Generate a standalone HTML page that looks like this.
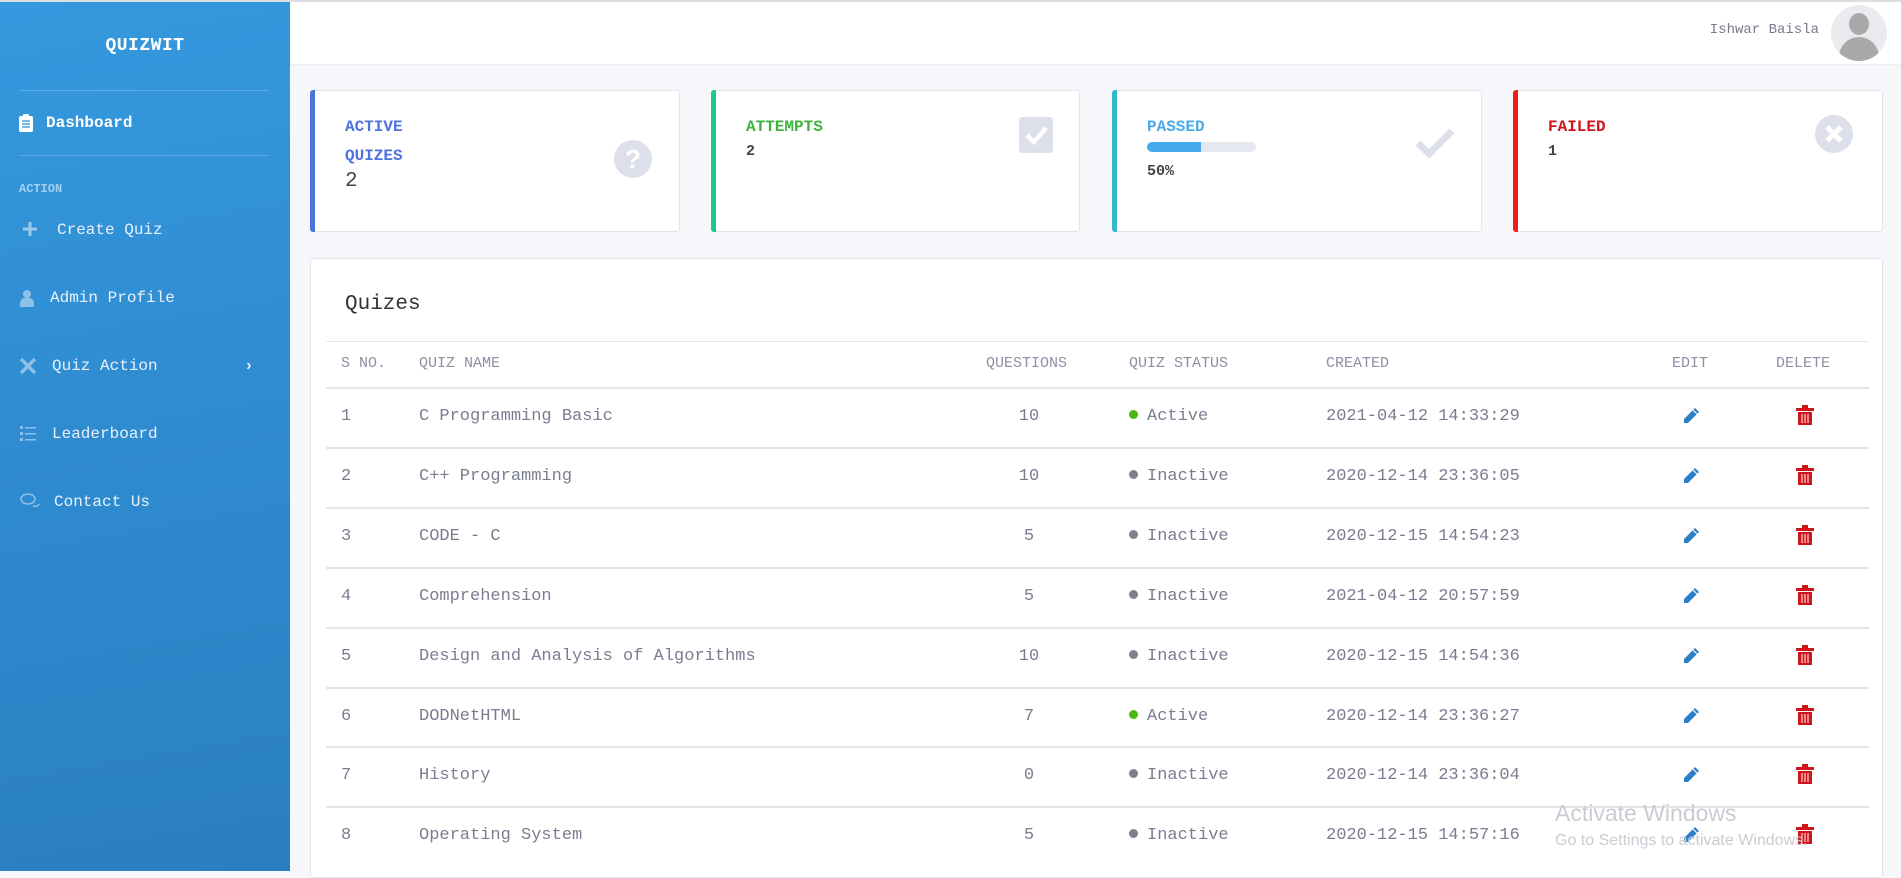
<!DOCTYPE html>
<html><head><meta charset="utf-8"><style>
*{box-sizing:border-box;margin:0;padding:0}
body{width:1901px;height:871px;overflow:hidden;background:#f5f7fb;font-family:"Liberation Mono","DejaVu Sans Mono",monospace;position:relative}
.tb{position:absolute;left:0;top:0;width:1901px;height:2px;background:#dcdde3}
.sb{position:absolute;left:0;top:2px;width:290px;height:869px;background:linear-gradient(170deg,#3599de 0%,#2f8bd0 50%,#2a7fc0 100%);color:#fff}
.abs{position:absolute}
.hr{position:absolute;left:19px;width:250px;height:1px;background:rgba(255,255,255,.22)}
.nav{position:absolute;color:#e8f1fb;font-size:16px}
.nav svg{position:absolute;left:-34px;top:0}
.top{position:absolute;left:290px;top:2px;right:0;height:63px;background:#fff;border-bottom:1px solid #eceef3}
.card{position:absolute;top:90px;height:142px;background:#fff;border:1px solid #e2e4ea;border-radius:3px}
.card .bar{position:absolute;left:-1px;top:-1px;bottom:-1px;width:5px;border-radius:3px 0 0 3px}
.ct{position:absolute;left:34px;top:22px;font-size:16px;font-weight:bold;line-height:29px}
.panel{position:absolute;left:310px;top:258px;width:1573px;height:620px;background:#fff;border:1px solid #e2e4ea;border-radius:3px}
.row{position:absolute;left:15px;width:1543px;border-top:2px solid #e2e4ea;height:60px}
.c{position:absolute;font-size:17px;color:#7a7d90;top:18px;white-space:nowrap}
.h{position:absolute;font-size:15px;color:#8d90a2;white-space:nowrap}
.dot{display:inline-block;width:9px;height:9px;border-radius:50%;margin-right:9px;vertical-align:1px}
</style></head><body>
<div class="tb"></div>
<div class="sb">
 <div class="abs" style="left:0;width:290px;text-align:center;top:34px;font-size:18px;font-weight:bold;letter-spacing:.5px">QUIZWIT</div>
 <div class="hr" style="top:88px"></div>
 <div class="nav" style="left:46px;top:112px;font-weight:bold;color:#fff"><svg width="14" height="18" viewBox="0 0 14 18" style="left:-27px;top:0"><rect x="0" y="2" width="14" height="16" rx="2" fill="#fff"/><rect x="4" y="0" width="6" height="4" rx="1" fill="#fff"/><g stroke="#3290d6" stroke-width="1.3"><path d="M3 7h8M3 10h8M3 13h8"/></g></svg>Dashboard</div>
 <div class="hr" style="top:153px"></div>
 <div class="abs" style="left:19px;top:180px;font-size:12px;color:rgba(255,255,255,.55);font-weight:bold">ACTION</div>
 <div class="nav" style="left:57px;top:219px"><svg width="16" height="16" viewBox="0 0 16 16" style="left:-35px"><path d="M8 1v14M1 8h14" stroke="rgba(255,255,255,.5)" stroke-width="3"/></svg>Create Quiz</div>
 <div class="nav" style="left:50px;top:287px"><svg width="14" height="18" viewBox="0 0 14 18" style="left:-30px"><circle cx="7" cy="5" r="4" fill="rgba(255,255,255,.45)"/><path d="M0 18v-4a5 5 0 0 1 5-5h4a5 5 0 0 1 5 5v4z" fill="rgba(255,255,255,.45)"/></svg>Admin Profile</div>
 <div class="nav" style="left:52px;top:355px"><svg width="18" height="18" viewBox="0 0 18 18" style="left:-33px"><path d="M2 2l14 14M16 2L2 16" stroke="rgba(255,255,255,.45)" stroke-width="3.5"/></svg>Quiz Action</div>
 <div class="abs" style="left:244px;top:355px;color:#e0ecf8;font-size:16px;font-weight:bold">›</div>
 <div class="nav" style="left:52px;top:423px"><svg width="16" height="16" viewBox="0 0 16 16" style="left:-32px"><g fill="rgba(255,255,255,.45)"><rect x="0" y="1" width="3" height="3"/><rect x="0" y="7" width="3" height="3"/><rect x="0" y="13" width="3" height="3"/><rect x="5" y="2" width="11" height="1.5"/><rect x="5" y="8" width="11" height="1.5"/><rect x="5" y="14" width="11" height="1.5"/></g></svg>Leaderboard</div>
 <div class="nav" style="left:54px;top:491px"><svg width="20" height="16" viewBox="0 0 20 16" style="left:-34px"><g fill="none" stroke="rgba(255,255,255,.45)" stroke-width="1.6"><ellipse cx="8" cy="6" rx="7" ry="5"/><path d="M13 13c3 1 5 0 6-2"/></g></svg>Contact Us</div>
</div>
<div class="top">
 <div class="abs" style="right:82px;top:20px;font-size:14px;color:#777a88">Ishwar Baisla</div>
 <div class="abs" style="right:14px;top:3px;width:56px;height:56px;border-radius:50%;background:#e9ebee;overflow:hidden"><div class="abs" style="left:18px;top:8px;width:20px;height:22px;border-radius:50%;background:#a9a9a9"></div><div class="abs" style="left:8px;top:32px;width:40px;height:30px;border-radius:20px 20px 0 0;background:#a9a9a9"></div></div>
</div>

<div class="card" style="left:310px;width:370px"><div class="bar" style="background:#4e73df"></div>
 <div class="ct" style="color:#4e73df">ACTIVE<br>QUIZES</div>
 <div class="abs" style="left:34px;top:79px;font-size:21px;color:#444">2</div>
 <svg class="abs" style="left:303px;top:49px" width="38" height="38" viewBox="0 0 38 38"><circle cx="19" cy="19" r="19" fill="#dddfeb"/><text x="19" y="28" text-anchor="middle" font-family="Liberation Sans" font-weight="bold" font-size="26" fill="#fff">?</text></svg>
</div>
<div class="card" style="left:711px;width:369px"><div class="bar" style="background:#1cc88a"></div>
 <div class="ct" style="color:#3db33d">ATTEMPTS</div>
 <div class="abs" style="left:34px;top:52px;font-size:15px;color:#444;font-weight:bold">2</div>
 <svg class="abs" style="left:307px;top:26px" width="34" height="36" viewBox="0 0 34 36"><rect width="34" height="36" rx="3" fill="#dddfeb"/><path d="M8 18l7 7 12-14" stroke="#fff" stroke-width="4.5" fill="none"/></svg>
</div>
<div class="card" style="left:1112px;width:370px"><div class="bar" style="background:#36b9cc"></div>
 <div class="ct" style="color:#4aa8ea">PASSED</div>
 <div class="abs" style="left:34px;top:51px;width:109px;height:10px;border-radius:5px;background:#e5e8ee;overflow:hidden"><div style="width:54px;height:10px;background:#45a9ee"></div></div>
 <div class="abs" style="left:34px;top:72px;font-size:15px;color:#444;font-weight:bold">50%</div>
 <svg class="abs" style="left:302px;top:37px" width="40" height="30" viewBox="0 0 40 30"><path d="M3 15l11 11L37 3" stroke="#dddfeb" stroke-width="7" fill="none"/></svg>
</div>
<div class="card" style="left:1513px;width:370px"><div class="bar" style="background:#f01b1b"></div>
 <div class="ct" style="color:#d0141a">FAILED</div>
 <div class="abs" style="left:34px;top:52px;font-size:15px;color:#444;font-weight:bold">1</div>
 <svg class="abs" style="left:301px;top:24px" width="38" height="38" viewBox="0 0 38 38"><circle cx="19" cy="19" r="19" fill="#dddfeb"/><path d="M12 12l14 14M26 12L12 26" stroke="#fff" stroke-width="5"/></svg>
</div>

<div class="panel">
 <div class="abs" style="left:34px;top:34px;font-size:21px;color:#333">Quizes</div>
 <div class="abs" style="left:15px;top:82px;width:1543px;height:1px;background:#e5e7ec"></div>
 <div class="h" style="left:30px;top:96px">S NO.</div>
 <div class="h" style="left:108px;top:96px">QUIZ NAME</div>
 <div class="h" style="left:675px;top:96px">QUESTIONS</div>
 <div class="h" style="left:818px;top:96px">QUIZ STATUS</div>
 <div class="h" style="left:1015px;top:96px">CREATED</div>
 <div class="h" style="left:1361px;top:96px">EDIT</div>
 <div class="h" style="left:1465px;top:96px">DELETE</div>
 <div id="rows"></div>
</div>
<div class="abs" style="left:1555px;top:800px;font-family:'Liberation Sans';font-size:23px;color:#c9ccd3">Activate Windows</div>
<div class="abs" style="left:1555px;top:832px;font-family:'Liberation Sans';font-size:16px;color:#c9ccd3">Go to Settings to activate Windows.</div>
<script>
var d=[["1","C Programming Basic","10",1,"2021-04-12 14:33:29"],["2","C++ Programming","10",0,"2020-12-14 23:36:05"],["3","CODE - C","5",0,"2020-12-15 14:54:23"],["4","Comprehension","5",0,"2021-04-12 20:57:59"],["5","Design and Analysis of Algorithms","10",0,"2020-12-15 14:54:36"],["6","DODNetHTML","7",1,"2020-12-14 23:36:27"],["7","History","0",0,"2020-12-14 23:36:04"],["8","Operating System","5",0,"2020-12-15 14:57:16"]];
var h="";
var pen='<svg width="20" height="20" viewBox="0 0 20 20"><path d="M14 2l4 4L7 17H3v-4z" fill="#2f7fc8"/><path d="M12 4l4 4" stroke="#fff" stroke-width="1.2"/></svg>';
var bin='<svg width="18" height="20" viewBox="0 0 18 20"><rect x="6" y="0" width="6" height="3" fill="#d0141a"/><rect x="0" y="3" width="18" height="3" fill="#d0141a"/><rect x="2" y="7" width="14" height="13" fill="#d0141a"/><path d="M6 9v9M9 9v9M12 9v9" stroke="#fff" stroke-width="1"/></svg>';
d.forEach(function(r,i){
 var t=128+i*59.9;
 h+='<div class="row" style="top:'+t+'px">'+
 '<div class="c" style="left:15px">'+r[0]+'</div>'+
 '<div class="c" style="left:93px">'+r[1]+'</div>'+
 '<div class="c" style="left:678px;width:50px;text-align:center">'+r[2]+'</div>'+
 '<div class="c" style="left:803px"><span class="dot" style="background:'+(r[3]?'#4cb80f':'#7d8091')+'"></span>'+(r[3]?'Active':'Inactive')+'</div>'+
 '<div class="c" style="left:1000px">'+r[4]+'</div>'+
 '<div class="c" style="left:1355px;top:17px">'+pen+'</div>'+
 '<div class="c" style="left:1470px;top:16px">'+bin+'</div></div>';
});
document.getElementById('rows').innerHTML=h;
</script>
</body></html>
